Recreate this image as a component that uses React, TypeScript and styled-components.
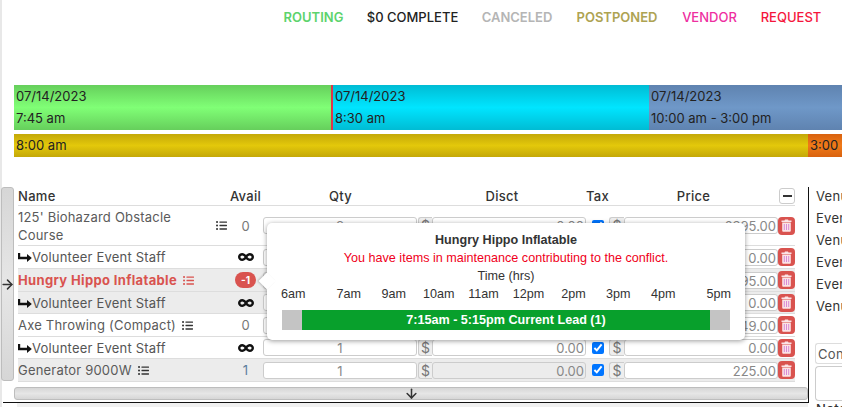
import React from 'react';
import styled, { createGlobalStyle } from 'styled-components';
import { ArrowDown, ArrowRight } from 'lucide-react';
import { FaInfinity, FaListUl } from 'react-icons/fa';

const GlobalStyle = createGlobalStyle`
  html, body {
    margin: 0;
    padding: 0;
    background: #fff;
  }
  * {
    box-sizing: border-box;
  }
`;

// Page
const Page = styled.div`
  width: 842px;
  height: 407px;
  overflow: hidden;
  font-family: Inter, 'Open Sans', sans-serif;
  font-size: 13px;
  color: #333;
  box-shadow: inset 2px 0 0 #e8e8e8;
`;

// Status nav
const Nav = styled.nav`
  height: 85px;
  display: flex;
  justify-content: flex-end;
  gap: 22px;
  padding: 9px 20px 0 0;
`;

const NavItem = styled.span<{ $color: string; $bold?: boolean; $width: number }>`
  width: ${(p) => p.$width}px;
  white-space: nowrap;
  line-height: 16px;
  font-size: 13px;
  text-align: center;
  font-weight: ${(p) => (p.$bold ? 600 : 500)};
  color: ${(p) => p.$color};
`;

// Timeline bars
const Timeline = styled.div`
  display: flex;
  margin-left: 14px;
  height: ${(p: { $h: number }) => p.$h}px;
`;

const Segment = styled.div<{ $w: number; $edge: string; $mid: string; $mark?: boolean }>`
  width: ${(p) => p.$w}px;
  padding-left: 2px;
  line-height: 22px;
  color: #222;
  white-space: nowrap;
  overflow: hidden;
  background: linear-gradient(${(p) => p.$edge}, ${(p) => p.$mid} 50%, ${(p) => p.$edge});
  border-right: ${(p) => (p.$mark ? '2px solid #e0344c' : 'none')};
`;

const TimelineGap = styled.div`
  height: ${(p: { $h: number }) => p.$h}px;
`;

// Main area
const Main = styled.div`
  display: flex;
`;

const LeftCol = styled.div`
  width: 809px;
  flex: none;
`;

const Bordered = styled.div`
  height: 215px;
  border-right: 1px solid #111;
  padding-left: 1px;
`;

const TableRow = styled.div`
  display: flex;
  gap: 4px;
`;

const scrollBg = 'linear-gradient(#d6d6d6, #e6e6e6 50%, #d6d6d6)';

const SideScroll = styled.div`
  width: 13px;
  height: 194px;
  flex: none;
  display: flex;
  align-items: center;
  justify-content: center;
  background: ${scrollBg};
  border: 1px solid #bdbdbd;
  border-radius: 3px;
  color: #333;

  svg {
    flex: none;
  }
`;

const BottomScroll = styled.div`
  width: 794px;
  height: 13px;
  margin: 5px 0 0 13px;
  display: flex;
  align-items: center;
  justify-content: center;
  background: ${scrollBg};
  border: 1px solid #bdbdbd;
  border-radius: 3px;
  color: #333;

  svg {
    flex: none;
  }
`;

const Rule = styled.div`
  height: 1px;
  margin-left: 3px;
  background: #111;
`;

const Footer = styled.div`
  height: 4px;
  margin: 0 1px 0 17px;
  background: #f0f0f0;
`;

// Table
const Table = styled.div`
  position: relative;
  width: 777px;
  margin-left: 0;
`;

const columns = '210px 35px 155px 14px 154px 23px 15px 154px 17px';

const HeaderRow = styled.div`
  display: grid;
  grid-template-columns: ${columns};
  height: 19px;
  align-items: center;
  font-weight: 500;
  letter-spacing: 0.3px;
  color: #333;
  border-bottom: 1px solid #ddd;
`;

const HeadCell = styled.div<{ $span?: number; $left?: boolean }>`
  grid-column: span ${(p) => p.$span ?? 1};
  text-align: ${(p) => (p.$left ? 'left' : 'center')};
`;

const MinusButton = styled.button`
  width: 16px;
  height: 16px;
  margin-left: 1px;
  padding: 0;
  display: flex;
  align-items: center;
  justify-content: center;
  background: #fff;
  border: 1px solid #ccc;
  border-radius: 3px;

  &::before {
    content: '';
    width: 9px;
    height: 2px;
    background: #333;
  }
`;

const Row = styled.div<{ $h: number; $shaded?: boolean }>`
  display: grid;
  grid-template-columns: ${columns};
  height: ${(p) => p.$h}px;
  align-items: center;
  background: ${(p) => (p.$shaded ? '#ececec' : '#fff')};
  border-bottom: 1px solid #ddd;
`;

const NameCell = styled.div<{ $alert?: boolean; $spread?: boolean }>`
  display: flex;
  align-items: center;
  gap: 6px;
  justify-content: ${(p) => (p.$spread ? 'space-between' : 'flex-start')};
  padding-right: ${(p) => (p.$spread ? '1px' : '0')};
  line-height: 18px;
  letter-spacing: ${(p) => (p.$alert ? '0.35px' : '0.2px')};
  color: ${(p) => (p.$alert ? '#d9534f' : '#5a5a5a')};
  font-weight: ${(p) => (p.$alert ? 700 : 400)};
  white-space: ${(p) => (p.$spread ? 'normal' : 'nowrap')};
`;

const WrapName = styled.span`
  width: 180px;
`;

const ChildName = styled.span`
  display: flex;
  align-items: center;
  color: #555;
`;

const AvailCell = styled.div<{ $color?: string }>`
  display: flex;
  justify-content: center;
  color: ${(p) => p.$color ?? '#777'};
`;

const Badge = styled.span`
  width: 21px;
  height: 16px;
  border-radius: 8px;
  background: #d9534f;
  color: #fff;
  font-size: 10px;
  font-weight: 700;
  line-height: 16px;
  text-align: center;
`;

const Field = styled.div<{ $align: string; $plain?: boolean }>`
  height: 17px;
  padding: 0 1px;
  line-height: 16px;
  text-align: ${(p) => p.$align};
  color: #888;
  background: ${(p) => (p.$plain ? 'transparent' : '#fff')};
  border: 1px solid #ccc;
  border-radius: 3px;
`;

const QtyField = styled(Field)`
  margin-right: 1px;
`;

const Addon = styled.div`
  height: 17px;
  line-height: 15px;
  font-size: 14px;
  text-align: center;
  color: #777;
  background: #eee;
  border: 1px solid #ccc;
  border-right: none;
  border-radius: 3px 0 0 3px;
`;

const CheckCell = styled.div`
  display: flex;
  justify-content: center;
`;

const Check = styled.input`
  width: 12px;
  height: 12px;
  margin: 0;
  accent-color: #0075ff;
`;

const TrashButton = styled.div`
  width: 17px;
  height: 18px;
  display: flex;
  align-items: center;
  justify-content: center;
  background: #d9534f;
  border-radius: 4px;
`;

// Popover
const Popover = styled.div`
  position: absolute;
  left: 249px;
  top: 36px;
  width: 478px;
  height: 117px;
  padding: 9px 14px 0;
  background: #fff;
  border-radius: 5px;
  box-shadow: 0 1px 5px rgba(0, 0, 0, 0.4);
  font-family: 'Liberation Sans', Arial, sans-serif;
  font-size: 12.6px;
  line-height: 18px;
  text-align: center;
  color: #333;

  &::before {
    content: '';
    position: absolute;
    left: -6px;
    top: 52px;
    width: 12px;
    height: 12px;
    background: #fff;
    transform: rotate(45deg);
    box-shadow: -1px 1px 2px rgba(0, 0, 0, 0.2);
  }
`;

const PopTitle = styled.div`
  position: relative;
  font-weight: 700;
  line-height: 17px;
`;

const PopWarn = styled.div`
  position: relative;
  white-space: nowrap;
  color: #f00020;
`;

const Hours = styled.div`
  position: relative;
  display: flex;
`;

const Hour = styled.span<{ $w: number; $align: string }>`
  width: ${(p) => p.$w}px;
  text-align: ${(p) => p.$align};
`;

const LeadBar = styled.div`
  position: relative;
  height: 20px;
  margin: 7px 1px 0;
  padding: 0 20px;
  background: #c4c4c4;
`;

const LeadFill = styled.div`
  height: 20px;
  line-height: 20px;
  background: #08a02c;
  color: #fff;
  font-weight: 700;
`;

// Right panel
const RightPanel = styled.div`
  flex: 1;
  min-width: 0;
  overflow: hidden;
  padding-left: 7px;
  white-space: nowrap;
  letter-spacing: 0.3px;
  color: #333;
`;

const PanelLabel = styled.div`
  height: 22px;
  line-height: 18px;
`;

const ConField = styled.div`
  margin: 24px 0 2px -1px;
  height: 21px;
  padding-left: 2px;
  line-height: 20px;
  color: #555;
  border: 1px solid #ddd;
  border-right: none;
  border-radius: 3px 0 0 3px;
`;

const NoteBox = styled.div`
  height: 35px;
  margin-left: -1px;
  border: 1px solid #ccc;
  border-right: none;
  border-radius: 4px 0 0 4px;
`;

const NoteLabel = styled.div`
  line-height: 16px;
  font-weight: 500;
`;

const ChildArrow = () => (
  <svg width="14" height="10" viewBox="0 0 14 10">
    <path d="M1 1v5h10" fill="none" stroke="#111" strokeWidth="2.4" />
    <path d="M9 2 13.800 6 9 10z" fill="#111" />
  </svg>
);

const TrashIcon = () => (
  <svg width="11" height="13" viewBox="0 0 11 13">
    <path d="M0.500 1.600h3l.5-1h3l.5 1h3v1.300h-10z" fill="#fbe4e6" />
    <path d="M1.200 3.600h8.600v8.200q0 1-1 1h-6.600q-1 0-1-1z" fill="#fbe4e6" />
    <path d="M3.300 5v6M5.500 5v6M7.700 5v6" stroke="#d88ad8" strokeWidth="1" />
  </svg>
);

const hours: [string, number, string][] = [
  ['6am', 45.5, 'left'],
  ['7am', 45, 'center'],
  ['9am', 45, 'center'],
  ['10am', 45, 'center'],
  ['11am', 45, 'center'],
  ['12pm', 45, 'center'],
  ['2pm', 45, 'center'],
  ['3pm', 45, 'center'],
  ['4pm', 45, 'center'],
  ['5pm', 45.5, 'right'],
];

const navItems = [
  { label: 'ROUTING', color: '#5dd36d', bold: true, width: 61 },
  { label: '$0 COMPLETE', color: '#222', width: 93 },
  { label: 'CANCELED', color: '#b5b5b5', bold: true, width: 72 },
  { label: 'POSTPONED', color: '#aea352', bold: true, width: 84 },
  { label: 'VENDOR', color: '#ee2f9f', width: 57 },
  { label: 'REQUEST', color: '#f5163c', width: 62 },
];

const rows = [
  { kind: 'wrap', name: "125' Biohazard Obstacle Course", avail: '0', h: 40, qty: '8', price: '6395.00' },
  { kind: 'child', name: 'Volunteer Event Staff', h: 23, qty: '1', price: '0.00' },
  { kind: 'alert', name: 'Hungry Hippo Inflatable', avail: 'badge', h: 23, shaded: true, qty: '1', price: '495.00' },
  { kind: 'child', name: 'Volunteer Event Staff', h: 22, shaded: true, qty: '1', price: '0.00' },
  { kind: 'item', name: 'Axe Throwing (Compact)', avail: '0', h: 23, qty: '1', price: '349.00' },
  { kind: 'child', name: 'Volunteer Event Staff', h: 22, qty: '1', price: '0.00' },
  { kind: 'item', name: 'Generator 9000W', avail: '1', h: 23, shaded: true, qty: '1', price: '225.00' },
];

const App: React.FC = () => {
  return (
    <Page>
      <GlobalStyle />
      <Nav>
        {navItems.map((item) => (
          <NavItem key={item.label} $color={item.color} $bold={item.bold} $width={item.width}>
            {item.label}
          </NavItem>
        ))}
      </Nav>

      <Timeline $h={45}>
        <Segment $w={319} $edge="#66cf5c" $mid="#80ff76" $mark>
          07/14/2023
          <br />
          7:45 am
        </Segment>
        <Segment $w={316} $edge="#00bcd4" $mid="#00e5ff">
          07/14/2023
          <br />
          8:30 am
        </Segment>
        <Segment $w={193} $edge="#5f83b0" $mid="#6f98c8">
          07/14/2023
          <br />
          10:00 am - 3:00 pm
        </Segment>
      </Timeline>
      <TimelineGap $h={4} />
      <Timeline $h={23}>
        <Segment $w={794} $edge="#c4a808" $mid="#e3c80b">
          8:00 am
        </Segment>
        <Segment $w={34} $edge="#d9620f" $mid="#f07a18">
          3:00
        </Segment>
      </Timeline>
      <TimelineGap $h={30} />

      <Main>
        <LeftCol>
          <Bordered>
            <TableRow>
              <SideScroll>
                <ArrowRight size={15} strokeWidth={2.4} />
              </SideScroll>
              <Table>
                <HeaderRow>
                  <HeadCell $left>Name</HeadCell>
                  <HeadCell>Avail</HeadCell>
                  <HeadCell>Qty</HeadCell>
                  <HeadCell $span={2}>Disct</HeadCell>
                  <HeadCell>Tax</HeadCell>
                  <HeadCell $span={2}>Price</HeadCell>
                  <MinusButton aria-label="Collapse" />
                </HeaderRow>
                {rows.map((row, i) => (
                  <Row key={i} $h={row.h} $shaded={row.shaded}>
                    <NameCell $alert={row.kind === 'alert'} $spread={row.kind === 'wrap'}>
                      {row.kind === 'child' ? (
                        <ChildName>
                          <ChildArrow />
                          {row.name}
                        </ChildName>
                      ) : (
                        <>
                          {row.kind === 'wrap' ? <WrapName>{row.name}</WrapName> : <span>{row.name}</span>}
                          <FaListUl size={11} color={row.kind === 'alert' ? '#d9534f' : '#333'} />
                        </>
                      )}
                    </NameCell>
                    <AvailCell $color={row.avail === '1' ? '#5b7c9c' : undefined}>
                      {row.kind === 'child' ? (
                        <FaInfinity size={16} color="#111" />
                      ) : row.avail === 'badge' ? (
                        <Badge>-1</Badge>
                      ) : (
                        row.avail
                      )}
                    </AvailCell>
                    <QtyField $align="center">{row.qty}</QtyField>
                    <Addon>$</Addon>
                    <Field $align="right" $plain>
                      0.00
                    </Field>
                    <CheckCell>
                      <Check type="checkbox" defaultChecked />
                    </CheckCell>
                    <Addon>$</Addon>
                    <Field $align="right">{row.price}</Field>
                    <TrashButton>
                      <TrashIcon />
                    </TrashButton>
                  </Row>
                ))}
                <Popover>
                  <PopTitle>Hungry Hippo Inflatable</PopTitle>
                  <PopWarn>You have items in maintenance contributing to the conflict.</PopWarn>
                  <div>Time (hrs)</div>
                  <Hours>
                    {hours.map(([label, w, align]) => (
                      <Hour key={label} $w={w} $align={align}>
                        {label}
                      </Hour>
                    ))}
                  </Hours>
                  <LeadBar>
                    <LeadFill>7:15am - 5:15pm Current Lead (1)</LeadFill>
                  </LeadBar>
                </Popover>
              </Table>
            </TableRow>
            <BottomScroll>
              <ArrowDown size={15} strokeWidth={2.4} />
            </BottomScroll>
          </Bordered>
          <Rule />
          <Footer />
        </LeftCol>

        <RightPanel>
          <PanelLabel>Venue</PanelLabel>
          <PanelLabel>Event</PanelLabel>
          <PanelLabel>Venue</PanelLabel>
          <PanelLabel>Event</PanelLabel>
          <PanelLabel>Event</PanelLabel>
          <PanelLabel>Venue</PanelLabel>
          <ConField>Contact</ConField>
          <NoteBox />
          <NoteLabel>Notes</NoteLabel>
        </RightPanel>
      </Main>
    </Page>
  );
};

export default App;
